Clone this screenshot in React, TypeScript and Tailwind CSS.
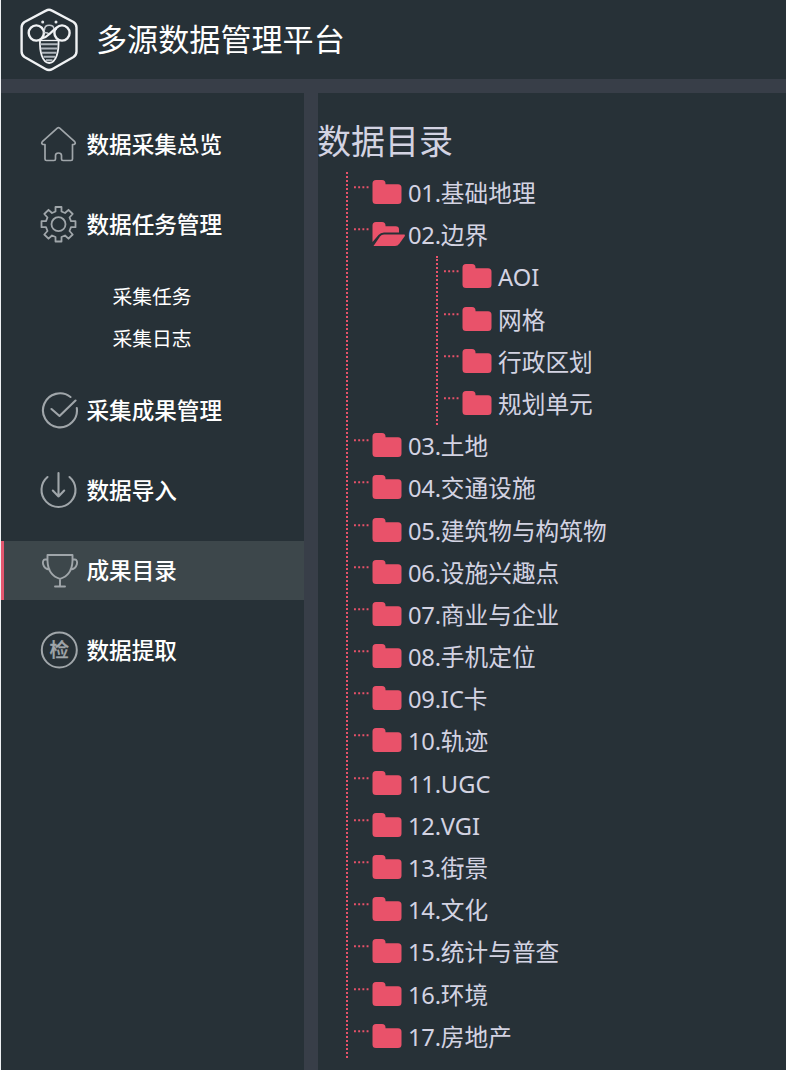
import type { ReactNode } from "react";

const CJK = "font-['Noto_Sans','Noto_Sans_CJK_SC',sans-serif]";

function BeeLogo() {
  return (
    <svg className="h-[64px] w-[60px] shrink-0" viewBox="0 0 60 64" fill="none" stroke="#f0f2f4">
      <path strokeWidth="2.4" strokeLinejoin="round" d="M27 2.600Q30 .8 33 2.600L54.500 14Q57.500 16 57.500 19.500V43.500Q57.500 47 54.500 49L33.500 61Q30 63 26.500 61L5.500 49Q2.600 47 2.600 43.500V19.500Q2.600 16 5.500 14Z" />
      <circle cx="17.300" cy="25" r="7.600" strokeWidth="2.400" />
      <circle cx="43" cy="25" r="7.600" strokeWidth="2.400" />
      <path strokeWidth="1.500" stroke="#c3c8cd" d="M25.500 22Q25.500 17.300 30.200 17.300Q34.800 17.300 35 21M24.500 24.500Q28 24 31 26.500" />
      <path strokeWidth="2.200" d="M22.500 30.500Q27 29.500 30.500 26T37.500 20" />
      <path strokeWidth="1.800" d="M21 32C20.500 43 23 54.500 30.200 55C37.500 54.500 40 43 39.500 32" />
      <path strokeWidth="2" stroke="#b0b6bd" d="M21.500 36.300H39M21.800 40.500H38.500M23 44.700H37.500M24.500 48.700H36M27 52.300H33.500" />
      <path strokeWidth="1.300" d="M21 32.500H39.500" />
      <circle cx="23.700" cy="14" r="1.500" fill="#e4e7ea" stroke="none" />
      <circle cx="37" cy="14" r="1.500" fill="#e4e7ea" stroke="none" />
    </svg>
  );
}

function Glyph({ children }: { children: ReactNode }) {
  return (
    <svg
      className="mr-[6.500px] h-[40px] w-[40px] shrink-0"
      viewBox="0 0 40 40"
      fill="none"
      stroke="#a0a6aa"
      strokeWidth="1.800"
      strokeLinecap="round"
      strokeLinejoin="round"
    >
      {children}
    </svg>
  );
}

const home = (
  <Glyph>
    <path d="M5 19.500H3Q.8 18.500 2.300 16.700L17.300 3.200Q18.500 2.200 19.700 3.200L34.700 16.700Q36.200 18.500 34 19.500H32.500V34Q32.500 35.500 31 35.500H23Q21.500 35.500 21.500 34V30.500Q21.500 28 18.500 28Q15.500 28 15.500 30.500V34Q15.500 35.500 14 35.500H6.500Q5 35.500 5 34Z" strokeWidth="1.700" />
  </Glyph>
);

const gear = (
  <Glyph>
    <path strokeWidth="1.800" d="M15.500 2H21.500V6.500L25 8L28.500 4.800L32.700 9L29.500 12.500L31 16.200H35.500V22.200H31L29.500 26L32.700 29.500L28.500 33.700L25 30.500L21.500 32V36.500H15.500V32L12 30.500L8.500 33.700L4.300 29.500L7.500 26L6 22.200H1.500V16.200H6L7.500 12.500L4.300 9L8.500 4.800L12 8L15.500 6.500Z" />
    <circle cx="18.500" cy="19.200" r="7" />
  </Glyph>
);

const check = (
  <Glyph>
    <path d="M30.500 6A17 17 0 1 0 36.800 17M11.500 18L19.500 25L35.500 9.500" strokeWidth="2.100" />
  </Glyph>
);

const download = (
  <Glyph>
    <path d="M7.500 6A17 17 0 1 0 29.500 6M18.500 2V25.500M12.800 19.500L18.500 25.500L24.200 19.500" strokeWidth="2.100" />
  </Glyph>
);

const trophy = (
  <Glyph>
    <path d="M7.500 4H32.500V10C32 21 26.500 26 20 27.800C13.500 26 8 21 7.500 10ZM7.500 8.500H5C1.500 8.500 2 18 9.500 18.500M32.500 8.500H35C38.500 8.500 38 18 30.500 18.500M20 28V35.500M15 35.500H25" strokeWidth="1.900" />
  </Glyph>
);

const inspect = (
  <Glyph>
    <circle cx="19.300" cy="19" r="17.500" strokeWidth="2" />
    <text
      x="19.300"
      y="26.200"
      textAnchor="middle"
      fontSize="19.500"
      fill="#a0a6aa"
      stroke="#a0a6aa"
      strokeWidth=".3"
      className="font-['Noto_Sans_CJK_SC',sans-serif]"
    >
      检
    </text>
  </Glyph>
);

function MenuItem({ icon, label, active }: { icon: ReactNode; label: string; active?: boolean }) {
  return (
    <a
      className={`mb-[21px] flex h-[59px] items-center border-l-[3px] pl-[36px] text-[22.6px] font-medium text-white ${
        active ? "border-[#e3576f] bg-[#3d474b]" : "border-transparent"
      }`}
    >
      {icon}
      <span className="pt-px">{label}</span>
    </a>
  );
}

function Folder({ open }: { open?: boolean }) {
  return (
    <svg className="h-[26px] w-[34px] shrink-0" viewBox="0 0 34 26" fill="#e9526a">
      {open ? (
        <>
          <path d="M.5 21V4.500Q.5 1 4 1H10Q13.500 1 13.500 4.500V5.300H23.500Q27 5.300 27 8.500V11.500H12Q8.500 11.500 6.500 14Z" />
          <path d="M1.500 25L8 15.500Q9.500 13.500 12 13.500H32.500Q33.500 14 32.500 15.500L27.500 22.500Q25.700 25 23 25Z" />
        </>
      ) : (
        <path d="M.5 4.500Q.5 1 4 1H10Q13.500 1 13.500 4.500V5.300H26Q29.500 5.300 29.500 8.800V21.500Q29.500 25 26 25H4Q.5 25 .5 21.500Z" />
      )}
    </svg>
  );
}

function Row({ no, name, open }: { no?: string; name: string; open?: boolean }) {
  return (
    <div className="flex h-[42.19px] items-start text-[23.7px] leading-[43px] text-[#d3d3e2]">
      <svg className="mt-[14px] ml-[6px] h-[3px] w-[18px] shrink-0" viewBox="0 0 18 3" fill="#e9526a">
        <path d="M0 .3h1.900v1.900H0zM4.200.3h1.900v1.900H4.200zM8.400.3h1.900v1.900H8.400zM12.600.3h1.900v1.900H12.600z" />
      </svg>
      <div className="mt-[7px] flex h-[26px] w-[36px] shrink-0">
        <Folder open={open} />
      </div>
      <span className="whitespace-nowrap">
        {no && <span className="tracking-[-0.2px]">{no}.</span>}
        {name}
      </span>
    </div>
  );
}

const before = [
  ["01", "基础地理"],
  ["02", "边界"],
];
const children = ["AOI", "网格", "行政区划", "规划单元"];
const after = [
  ["03", "土地"],
  ["04", "交通设施"],
  ["05", "建筑物与构筑物"],
  ["06", "设施兴趣点"],
  ["07", "商业与企业"],
  ["08", "手机定位"],
  ["09", "IC卡"],
  ["10", "轨迹"],
  ["11", "UGC"],
  ["12", "VGI"],
  ["13", "街景"],
  ["14", "文化"],
  ["15", "统计与普查"],
  ["16", "环境"],
  ["17", "房地产"],
];

export default function App() {
  return (
    <div className={`flex h-[1070px] w-[786px] flex-col overflow-hidden border-l border-[#eef1f3] bg-[#383e48] ${CJK}`}>
      <header className="flex h-[79px] shrink-0 items-center bg-[#273137] pl-[18px]">
        <BeeLogo />
        <h1 className="ml-[17px] text-[31.1px] leading-none text-white">多源数据管理平台</h1>
      </header>
      <div className="mt-[14px] flex min-h-0 flex-1 gap-[14px]">
        <nav className="w-[303px] shrink-0 bg-[#273137] pt-[22px]">
          <MenuItem icon={home} label="数据采集总览" />
          <MenuItem icon={gear} label="数据任务管理" />
          <div className="mb-[21px] flex h-[85px] flex-col pt-px pl-[111.5px] text-[19.8px] leading-[42.3px] text-white">
            <a>采集任务</a>
            <a>采集日志</a>
          </div>
          <MenuItem icon={check} label="采集成果管理" />
          <MenuItem icon={download} label="数据导入" />
          <MenuItem icon={trophy} label="成果目录" active />
          <MenuItem icon={inspect} label="数据提取" />
        </nav>
        <main className="min-w-0 flex-1 bg-[#273137] pt-[23px]">
          <h2 className="-ml-px h-[56px] text-[34px] leading-[51px] text-[#d3d3e2]">数据目录</h2>
          <div className="ml-[28px] border-l-2 border-dotted border-[#e9526a]">
            {before.map(([no, name]) => (
              <Row key={no} no={no} name={name} open={no === "02"} />
            ))}
            <div className="ml-[88px] border-l-2 border-dotted border-[#e9526a]">
              {children.map((name) => (
                <Row key={name} name={name} />
              ))}
            </div>
            {after.map(([no, name]) => (
              <Row key={no} no={no} name={name} />
            ))}
          </div>
        </main>
      </div>
    </div>
  );
}
